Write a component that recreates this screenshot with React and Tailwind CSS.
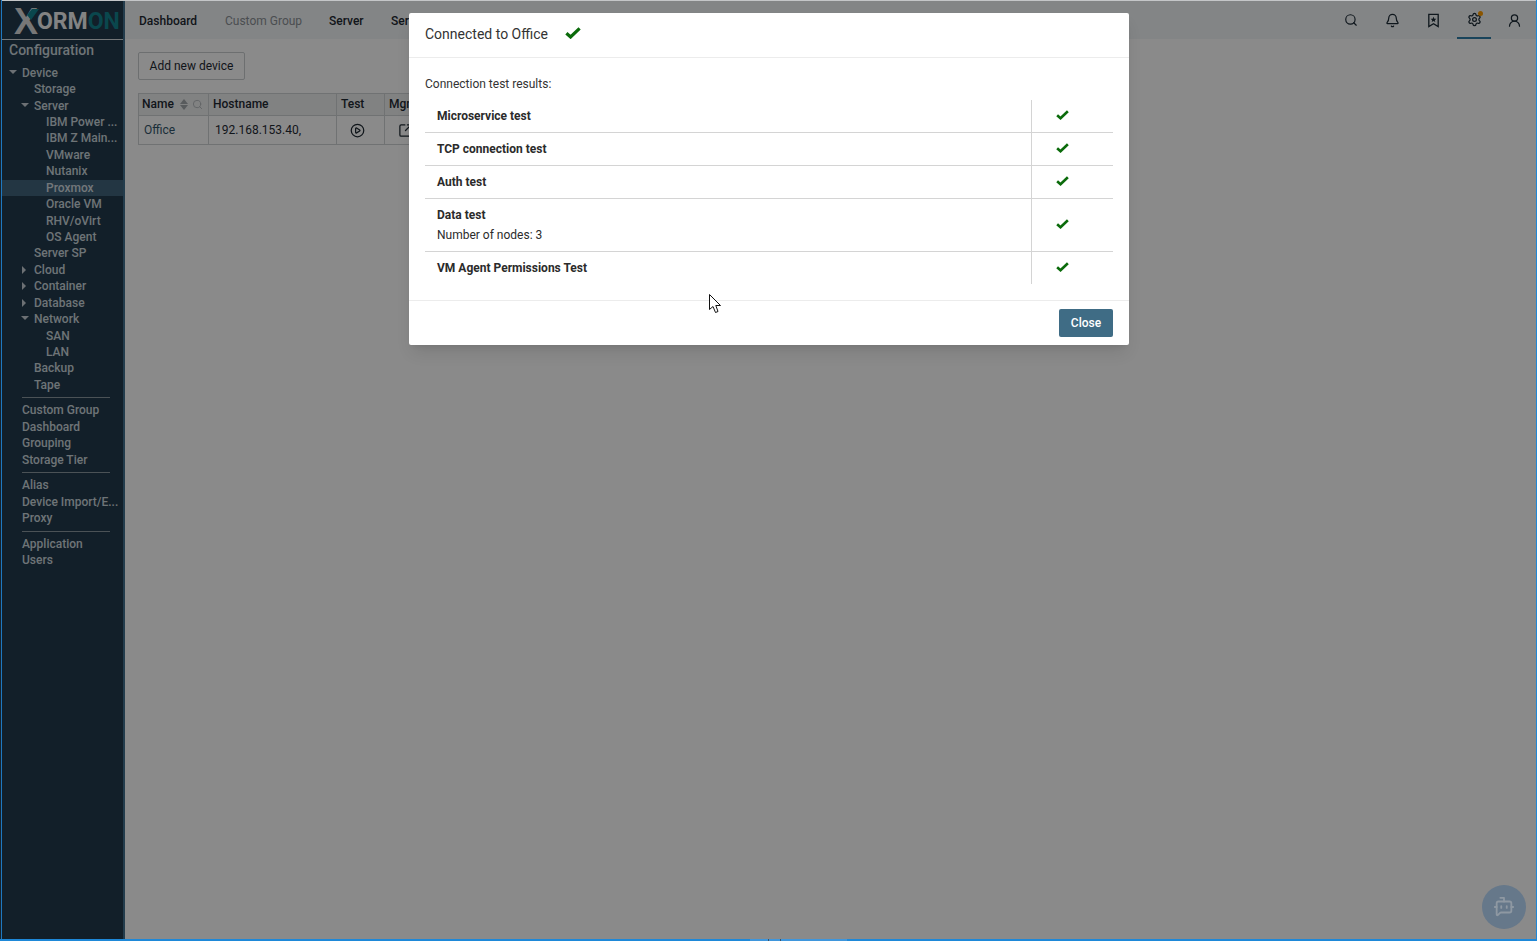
import { Search, Bell, Settings, UserRound, CirclePlay, SquareArrowOutUpRight, BotMessageSquare } from 'lucide-react';

const font = { fontFamily: 'Roboto, sans-serif' };

const tree = [
  { label: 'Device', indent: 1, arrow: 'down' },
  { label: 'Storage', indent: 2 },
  { label: 'Server', indent: 2, arrow: 'down' },
  { label: 'IBM Power ...', indent: 3 },
  { label: 'IBM Z Main...', indent: 3 },
  { label: 'VMware', indent: 3 },
  { label: 'Nutanix', indent: 3 },
  { label: 'Proxmox', indent: 3, active: true },
  { label: 'Oracle VM', indent: 3 },
  { label: 'RHV/oVirt', indent: 3 },
  { label: 'OS Agent', indent: 3 },
  { label: 'Server SP', indent: 2 },
  { label: 'Cloud', indent: 2, arrow: 'right' },
  { label: 'Container', indent: 2, arrow: 'right' },
  { label: 'Database', indent: 2, arrow: 'right' },
  { label: 'Network', indent: 2, arrow: 'down' },
  { label: 'SAN', indent: 3 },
  { label: 'LAN', indent: 3 },
  { label: 'Backup', indent: 2 },
  { label: 'Tape', indent: 2 },
];

const groups = [
  ['Custom Group', 'Dashboard', 'Grouping', 'Storage Tier'],
  ['Alias', 'Device Import/E...', 'Proxy'],
  ['Application', 'Users'],
];

const results = [
  { name: 'Microservice test', h: 'h-[33px]' },
  { name: 'TCP connection test', h: 'h-[33px]' },
  { name: 'Auth test', h: 'h-[33px]' },
  { name: 'Data test', note: 'Number of nodes: 3', h: 'h-[53px]' },
  { name: 'VM Agent Permissions Test', h: 'h-[32px]', last: true },
];

function Check({ className }) {
  return (
    <svg viewBox="0 0 16 12" className={className} fill="none" stroke="#0b6b0b" strokeWidth="3.2">
      <path d="M1.4 6.2 L5.6 10 L14.6 1.4" />
    </svg>
  );
}

function BookmarkStar() {
  return (
    <svg width="15" height="15" viewBox="0 0 16 16" fill="none" stroke="currentColor" strokeWidth="1.4">
      <path d="M3 1.5 H13 V14.5 L8 11.5 L3 14.5 Z" />
      <path d="M8 4 L8.9 6 L11 6.2 L9.4 7.6 L9.9 9.7 L8 8.6 L6.1 9.7 L6.6 7.6 L5 6.2 L7.1 6 Z" fill="currentColor" stroke="none" />
    </svg>
  );
}

function Logo() {
  return (
    <div className="relative h-[39px] border-b border-[#d7dde0] flex items-center pl-[12px] pt-[3px] font-bold leading-none">
      <span className="text-[#dcdcdc] text-[36px] leading-[36px]" style={{ fontFamily: '"Liberation Sans", sans-serif' }}>X</span>
      <svg className="absolute left-[24px] top-[8px]" width="13" height="11" viewBox="0 0 13 11">
        <path d="M6 0 H13 L5 11 L1 6 Z" fill="#14838f" />
      </svg>
      <span className="text-[#f2f2f2] text-[23px] -ml-[1px]">ORM</span>
      <span className="text-[#14838f] text-[23px]">ON</span>
    </div>
  );
}

function TreeItem({ item }) {
  const pad = { 1: 'pl-5', 2: 'pl-8', 3: 'pl-11' }[item.indent];
  return (
    <div className={`relative h-[16.43px] leading-[16.43px] whitespace-nowrap ${pad} ${item.active ? 'bg-[#41657c] text-[#d4dde2]' : ''}`}>
      {item.arrow === 'down' && <span className={`absolute top-[5px] border-x-[4px] border-t-[4px] border-x-transparent border-t-[#c8d0d6] ${item.indent === 2 ? 'left-[19px]' : 'left-[7px]'}`} />}
      {item.arrow === 'right' && <span className="absolute top-[4px] left-[20px] border-y-[4px] border-l-[4px] border-y-transparent border-l-[#c8d0d6]" />}
      {item.label}
    </div>
  );
}

function Sidebar() {
  return (
    <aside className="w-[123px] shrink-0 bg-[#223a4c] border-r-2 border-[#416f8c] text-[12px] font-medium text-[#cbd6dc]">
      <Logo />
      <div className="pl-[7px] h-[24.75px] text-[14px] leading-[20px]">Configuration</div>
      {tree.map((item) => <TreeItem key={item.label} item={item} />)}
      {groups.map((group) => (
        <div key={group[0]}>
          <div className="ml-5 mr-[13px] mt-[4px] mb-[4px] border-t border-[#8b98a0]" />
          <div className="pl-5">
            {group.map((label) => (
              <div key={label} className="h-[16.5px] leading-[16.5px] whitespace-nowrap">{label}</div>
            ))}
          </div>
        </div>
      ))}
    </aside>
  );
}

function TopBar() {
  return (
    <header className="h-[38px] bg-[#f3f6f8] flex items-center text-[12px] font-medium">
      <nav className="flex items-center pl-[14px] pt-px text-[#1f2a33]">
        <span className="w-[86px]">Dashboard</span>
        <span className="w-[104px] text-[#8b9196] font-normal">Custom Group</span>
        <span className="w-[62px]">Server</span>
        <span>Server SP</span>
      </nav>
      <div className="ml-auto flex items-center h-full pr-[3px] text-[#1c2b36]">
        <div className="w-[42px] flex justify-center"><Search size={14} /></div>
        <div className="w-[41px] flex justify-center"><Bell size={15} /></div>
        <div className="w-[41px] flex justify-center"><BookmarkStar /></div>
        <div className="relative w-[34px] mx-[3px] h-full flex items-center justify-center border-b-2 border-[#2f7fa8]">
          <Settings size={15} />
          <span className="absolute top-[10px] right-[8px] w-[5px] h-[5px] rounded-full bg-[#ff9d00]" />
        </div>
        <div className="w-[40px] flex justify-center"><UserRound size={15} /></div>
      </div>
    </header>
  );
}

function SortArrows() {
  return (
    <span className="ml-[6px] flex flex-col gap-px">
      <span className="border-x-[4px] border-b-[5px] border-x-transparent border-b-[#a3a8ac]" />
      <span className="border-x-[4px] border-t-[5px] border-x-transparent border-t-[#a3a8ac]" />
    </span>
  );
}

function DeviceTable() {
  return (
    <div className="mt-[13px] w-[330px] border border-[#cfd2d4] text-[12px] text-[#1f2a33]">
      <div className="flex h-[22px] items-center bg-[#eef0f1] border-b border-[#cfd2d4] font-medium">
        <div className="w-[70px] h-full flex items-center pl-[3px] pb-[1px] border-r border-[#cfd2d4]">
          Name
          <SortArrows />
          <Search size={11} className="ml-[4px] text-[#b4b8bb]" />
        </div>
        <div className="w-[128px] h-full flex items-center pl-[4px] pb-[1px] border-r border-[#cfd2d4]">Hostname</div>
        <div className="w-[48px] h-full flex items-center pl-[4px] pb-[1px] border-r border-[#cfd2d4]">Test</div>
        <div className="pl-[4px] pb-[1px]">Mgmt</div>
      </div>
      <div className="flex h-[28px] items-center">
        <div className="w-[70px] h-full flex items-center pl-[5px] border-r border-[#cfd2d4] text-[#33566b]">Office</div>
        <div className="w-[128px] h-full flex items-center pl-[6px] border-r border-[#cfd2d4]">192.168.153.40,</div>
        <div className="w-[48px] h-full flex items-center pl-[13px] border-r border-[#cfd2d4]"><CirclePlay size={15} /></div>
        <div className="pl-[13px]"><SquareArrowOutUpRight size={15} /></div>
      </div>
    </div>
  );
}

function ResultRow({ row }) {
  return (
    <div className={`flex ${row.h} ${row.last ? '' : 'border-b border-[#d4d4d4]'}`}>
      <div className="w-[607px] pl-3 border-r border-[#d4d4d4] flex flex-col justify-center gap-[6px] text-[12px] leading-[14px] text-[#2b2b2b]">
        <div className="font-bold">{row.name}</div>
        {row.note && <div>{row.note}</div>}
      </div>
      <div className="flex-1 flex items-center pl-[24px]">
        <Check className="w-[13px] h-[10px] mb-[2px]" />
      </div>
    </div>
  );
}

function Modal() {
  return (
    <div className="absolute top-[13px] left-[409px] w-[720px] h-[332px] bg-white rounded-[2px] shadow-lg flex flex-col">
      <div className="h-[45px] shrink-0 border-b border-[#ececec] flex items-center pl-4 pb-[2px] text-[14px] text-[#333]">
        Connected to Office
        <Check className="ml-[17px] mb-[2px] w-[16px] h-[12px]" />
      </div>
      <div className="flex-1 px-4 pt-[19px]">
        <div className="h-[23px] text-[12px] leading-[14px] text-[#333]">Connection test results:</div>
        {results.map((row) => <ResultRow key={row.name} row={row} />)}
      </div>
      <div className="h-[45px] shrink-0 border-t border-[#ececec] flex items-center justify-end pr-4">
        <button className="w-[54px] h-[28px] rounded-[2px] bg-[#3f6c85] text-white text-[12px] font-medium">Close</button>
      </div>
    </div>
  );
}

function Cursor() {
  return (
    <svg className="absolute top-[294px] left-[709px]" width="13" height="20" viewBox="0 0 13 20">
      <path d="M0.5 0.5 L0.5 15.5 L4 12.5 L6.5 18.5 L9 17.5 L6.8 11.5 L11.5 11.5 Z" fill="#fff" stroke="#111" strokeWidth="1" />
    </svg>
  );
}

export default function App() {
  return (
    <div style={font} className="relative w-[1537px] h-[941px] overflow-hidden bg-white">
      <div className="flex h-[939px] mt-px ml-[2px]">
        <Sidebar />
        <main className="flex-1">
          <TopBar />
          <div className="pl-[13px] pt-[13px]">
            <button className="block w-[107px] h-[28px] border border-[#c9cdd0] rounded-[2px] bg-white text-[12px] text-[#1f2a33]">Add new device</button>
            <DeviceTable />
          </div>
        </main>
      </div>
      <div className="absolute inset-0 bg-black/[0.46]" />
      <div className="absolute left-0 right-0 top-0 h-px bg-[#c4c6c8]" />
      <div className="absolute left-0 top-0 bottom-0 w-px bg-[#16222c]" />
      <div className="absolute left-px top-0 bottom-0 w-px bg-[#1e78c0]" />
      <div className="absolute left-0 right-0 bottom-0 h-[2px] bg-[#1e88d8]" />
      <div className="absolute left-[750px] bottom-0 w-[97px] h-[2px] bg-[#3f96dc]" />
      <div className="absolute left-[768px] bottom-0 w-px h-[2px] bg-[#33506a]" />
      <div className="absolute left-[780px] bottom-0 w-px h-[2px] bg-[#33506a]" />
      <div className="absolute right-0 top-0 bottom-0 w-px bg-[#1e88d8]" />
      <div className="absolute left-[1482px] top-[885px] w-[44px] h-[44px] rounded-full bg-[#66788a] flex items-center justify-center text-[#8e98a2]">
        <BotMessageSquare size={22} />
      </div>
      <Modal />
      <Cursor />
    </div>
  );
}
